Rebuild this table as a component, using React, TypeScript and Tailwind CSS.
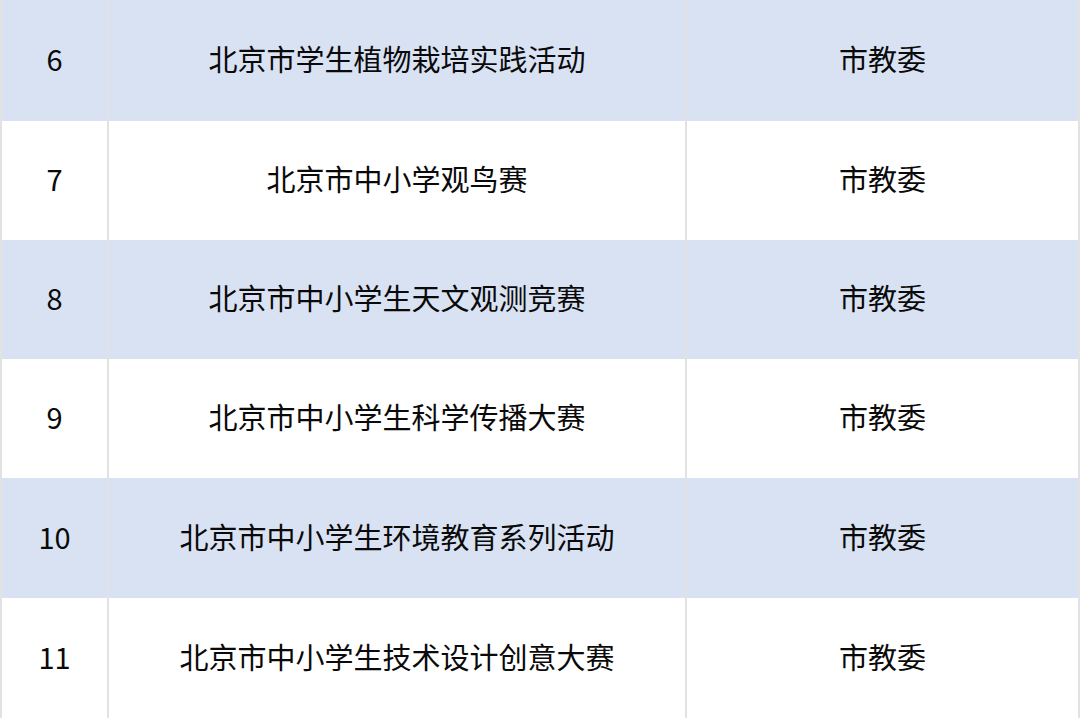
import React from 'react';

const rows = [
  { no: '6', name: '北京市学生植物栽培实践活动', org: '市教委', h: 'h-[121px]' },
  { no: '7', name: '北京市中小学观鸟赛', org: '市教委', h: 'h-[119px]' },
  { no: '8', name: '北京市中小学生天文观测竞赛', org: '市教委', h: 'h-[119px]' },
  { no: '9', name: '北京市中小学生科学传播大赛', org: '市教委', h: 'h-[119px]' },
  { no: '10', name: '北京市中小学生环境教育系列活动', org: '市教委', h: 'h-[120px]' },
  { no: '11', name: '北京市中小学生技术设计创意大赛', org: '市教委', h: 'h-[120px]' },
];

export default function App() {
  return (
    <div
      className="w-[1080px] h-[718px] overflow-hidden bg-white text-[29px] text-[#0a0a0a] border-x-2 border-[#e2e2e2]"
      style={{ fontFamily: '"Noto Sans CJK SC", "Noto Sans", sans-serif' }}
    >
      {rows.map((r, i) => (
        <div
          key={r.no}
          className={`flex ${r.h} ${i % 2 === 0 ? 'bg-[#d9e2f3]' : 'bg-white'}`}
        >
          <div className="w-[105px] flex items-center justify-center pb-[3px]">{r.no}</div>
          <div className="w-[2px] bg-[#e2e2e2]" />
          <div className="w-[576px] flex items-center justify-center pb-[3px]">{r.name}</div>
          <div className="w-[2px] bg-[#e2e2e2]" />
          <div className="flex-1 flex items-center justify-center pb-[3px]">{r.org}</div>
        </div>
      ))}
    </div>
  );
}
